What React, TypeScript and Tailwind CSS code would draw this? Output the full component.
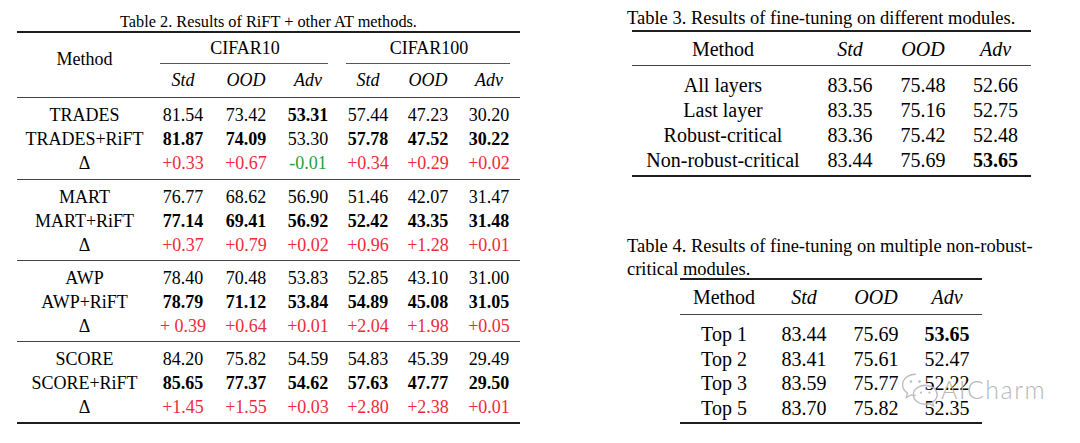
import React from "react";

const serif = "font-['Liberation_Serif','Times_New_Roman',serif]";

type Row = { name: string; vals: string[]; bold: number[] };
type Group = { rows: Row[]; delta: string[] };

const all = [0, 1, 2, 3, 4, 5];

const atGroups: Group[] = [
  {
    rows: [
      { name: "TRADES", vals: ["81.54", "73.42", "53.31", "57.44", "47.23", "30.20"], bold: [2] },
      { name: "TRADES+RiFT", vals: ["81.87", "74.09", "53.30", "57.78", "47.52", "30.22"], bold: [0, 1, 3, 4, 5] },
    ],
    delta: ["+0.33", "+0.67", "-0.01", "+0.34", "+0.29", "+0.02"],
  },
  {
    rows: [
      { name: "MART", vals: ["76.77", "68.62", "56.90", "51.46", "42.07", "31.47"], bold: [] },
      { name: "MART+RiFT", vals: ["77.14", "69.41", "56.92", "52.42", "43.35", "31.48"], bold: all },
    ],
    delta: ["+0.37", "+0.79", "+0.02", "+0.96", "+1.28", "+0.01"],
  },
  {
    rows: [
      { name: "AWP", vals: ["78.40", "70.48", "53.83", "52.85", "43.10", "31.00"], bold: [] },
      { name: "AWP+RiFT", vals: ["78.79", "71.12", "53.84", "54.89", "45.08", "31.05"], bold: all },
    ],
    delta: ["+ 0.39", "+0.64", "+0.01", "+2.04", "+1.98", "+0.05"],
  },
  {
    rows: [
      { name: "SCORE", vals: ["84.20", "75.82", "54.59", "54.83", "45.39", "29.49"], bold: [] },
      { name: "SCORE+RiFT", vals: ["85.65", "77.37", "54.62", "57.63", "47.77", "29.50"], bold: all },
    ],
    delta: ["+1.45", "+1.55", "+0.03", "+2.80", "+2.38", "+0.01"],
  },
];

const moduleRows = [
  { name: "All layers", vals: ["83.56", "75.48", "52.66"], bold: false },
  { name: "Last layer", vals: ["83.35", "75.16", "52.75"], bold: false },
  { name: "Robust-critical", vals: ["83.36", "75.42", "52.48"], bold: false },
  { name: "Non-robust-critical", vals: ["83.44", "75.69", "53.65"], bold: true },
];

const topRows = [
  { name: "Top 1", vals: ["83.44", "75.69", "53.65"], bold: true },
  { name: "Top 2", vals: ["83.41", "75.61", "52.47"], bold: false },
  { name: "Top 3", vals: ["83.59", "75.77", "52.22"], bold: false },
  { name: "Top 5", vals: ["83.70", "75.82", "52.35"], bold: false },
];

const cols2 = "grid grid-cols-[135px_62px_64px_60px_60px_60px_62px] text-center";

function ThickRule() {
  return <div className="h-[2px] bg-[#1e1e1e]" />;
}

function ThinRule() {
  return <div className="h-px bg-[#444]" />;
}

function AtTable() {
  return (
    <div className="w-[503px]">
      <div className="mt-[12px] text-center text-[16.3px] leading-[19px]">Table 2. Results of RiFT + other AT methods.</div>
      <ThickRule />
      {/* header */}
      <div className="flex text-[18px]">
        <div className="w-[135px] flex items-center justify-center pb-[12px]">Method</div>
        <div className="flex-1">
          <div className="flex h-[30px] items-center">
            <div className="w-[186px] text-center">CIFAR10</div>
            <div className="w-[182px] text-center">CIFAR100</div>
          </div>
          <div className="flex">
            <div className="w-[186px] pl-[8px] pr-[10px]">
              <div className="h-px bg-[#555]" />
            </div>
            <div className="w-[182px] pl-[8px] pr-[10px]">
              <div className="h-px bg-[#555]" />
            </div>
          </div>
          <div className="grid grid-cols-[62px_64px_60px_60px_60px_62px] h-[33px] items-center text-center italic">
            <div>Std</div>
            <div>OOD</div>
            <div>Adv</div>
            <div>Std</div>
            <div>OOD</div>
            <div>Adv</div>
          </div>
        </div>
      </div>
      <ThinRule />
      {atGroups.map((g, gi) => (
        <div key={gi}>
          <div className={gi === 0 ? "pt-[4px] pb-[5px] text-[18px]" : "pt-[4px] pb-[4px] text-[18px]"}>
            {g.rows.map((r) => (
              <div key={r.name} className={`${cols2} h-[24px] items-center`}>
                <div>{r.name}</div>
                {r.vals.map((v, i) => (
                  <div key={i} className={r.bold.includes(i) ? "font-bold" : ""}>
                    {v}
                  </div>
                ))}
              </div>
            ))}
            <div className={`${cols2} h-[24px] items-center`}>
              <div>Δ</div>
              {g.delta.map((d, i) => (
                <div key={i} className={d.startsWith("-") ? "text-[#23a03f]" : "text-[#ee2a3a]"}>
                  <span className="whitespace-pre">{d}</span>
                </div>
              ))}
            </div>
          </div>
          {gi < atGroups.length - 1 ? <ThinRule /> : <ThickRule />}
        </div>
      ))}
    </div>
  );
}

function SmallTable({
  cols,
  rows,
  rowH,
  headH,
}: {
  cols: string;
  rows: { name: string; vals: string[]; bold: boolean }[];
  rowH: string;
  headH: string;
}) {
  return (
    <div className="text-[20px]">
      <ThickRule />
      <div className={`grid ${cols} ${headH} items-center text-center`}>
        <div>Method</div>
        <div className="italic">Std</div>
        <div className="italic">OOD</div>
        <div className="italic">Adv</div>
      </div>
      <ThinRule />
      <div className="pt-[4px] pb-[5px]">
        {rows.map((r) => (
          <div key={r.name} className={`grid ${cols} ${rowH} items-center text-center`}>
            <div>{r.name}</div>
            <div>{r.vals[0]}</div>
            <div>{r.vals[1]}</div>
            <div className={r.bold ? "font-bold" : ""}>{r.vals[2]}</div>
          </div>
        ))}
      </div>
      <ThickRule />
    </div>
  );
}

function WeChatMark() {
  return (
    <div className="absolute left-[901px] top-[372px] flex items-center gap-[2px] pointer-events-none">
      <svg width="38" height="35" viewBox="0 0 36 33" fill="none" stroke="#bdbdbd" strokeWidth="1.3">
        <path d="M14 2C7 2 1.5 6.5 1.5 12c0 3.2 1.8 6 4.6 7.8L5 24l4.6-2.4c1.4.4 2.9.6 4.4.6" />
        <circle cx="9.5" cy="9" r="1.2" fill="#bdbdbd" stroke="none" />
        <circle cx="17.5" cy="9" r="1.2" fill="#bdbdbd" stroke="none" />
        <path d="M23 12.5c-6.3 0-11.3 4-11.3 9s5 9 11.3 9c1.3 0 2.5-.2 3.7-.5l4.2 2.1-1-3.7c2.7-1.6 4.4-4.1 4.4-6.9 0-5-5-9-11.3-9z" />
        <circle cx="19" cy="19.5" r="1" fill="#bdbdbd" stroke="none" />
        <circle cx="27" cy="19.5" r="1" fill="#bdbdbd" stroke="none" />
      </svg>
      <span className="text-[25px] leading-none font-light tracking-[1.5px] font-['Lato','Open_Sans',sans-serif] text-[#b8b8b8]">
        AICharm
      </span>
    </div>
  );
}

export default function App() {
  return (
    <div className={`relative w-[1080px] h-[443px] bg-white text-black overflow-hidden ${serif} flex items-start`}>
      <div className="pl-[17px]">
        <AtTable />
      </div>
      <div className="ml-[107px] w-[420px]">
        <div className="mt-[7px] text-[18.5px] leading-[23px] whitespace-nowrap">
          Table 3. Results of fine-tuning on different modules.
        </div>
        <div className="ml-[5px] w-[399px]">
          <SmallTable cols="grid-cols-[182px_72px_74px_71px]" rows={moduleRows} rowH="h-[25px]" headH="h-[33px]" />
        </div>
        <div className="mt-[58px] text-[18.5px] leading-[23px] whitespace-nowrap">
          Table 4. Results of fine-tuning on multiple non-robust-
          <br />
          critical modules.
        </div>
        <div className="ml-[53px] w-[302px] mt-[-3px]">
          <SmallTable cols="grid-cols-[88px_72px_72px_70px]" rows={topRows} rowH="h-[24.5px]" headH="h-[34px]" />
        </div>
      </div>
      <WeChatMark />
    </div>
  );
}
